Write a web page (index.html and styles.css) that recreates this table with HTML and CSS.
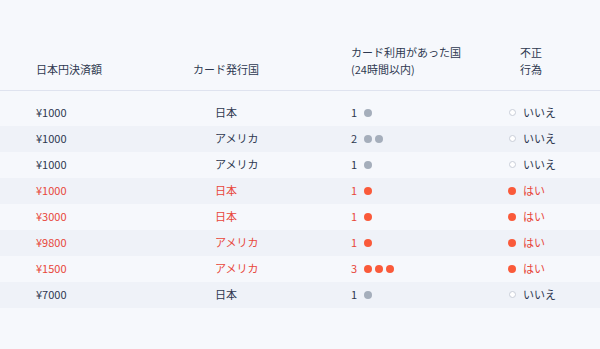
FILE: index.html
```html
<!DOCTYPE html>
<html lang="ja">
<head>
<meta charset="utf-8">
<link rel="stylesheet" href="styles.css">
</head>
<body>
<div class="table">
  <div class="row head">
    <div class="c1">日本円決済額</div>
    <div class="c2">カード発行国</div>
    <div class="c3">カード利用があった国<br>(24時間以内)</div>
    <div class="c4">不正<br>行為</div>
  </div>
  <div class="body">
    <div class="row">
      <div class="c1">¥1000</div><div class="c2 in">日本</div>
      <div class="c3 cnt">1<span class="dots"><i class="dot"></i></span></div>
      <div class="c4 flag"><i class="ring"></i>いいえ</div>
    </div>
    <div class="row alt">
      <div class="c1">¥1000</div><div class="c2 in">アメリカ</div>
      <div class="c3 cnt">2<span class="dots"><i class="dot"></i><i class="dot"></i></span></div>
      <div class="c4 flag"><i class="ring"></i>いいえ</div>
    </div>
    <div class="row">
      <div class="c1">¥1000</div><div class="c2 in">アメリカ</div>
      <div class="c3 cnt">1<span class="dots"><i class="dot"></i></span></div>
      <div class="c4 flag"><i class="ring"></i>いいえ</div>
    </div>
    <div class="row alt fraud">
      <div class="c1">¥1000</div><div class="c2 in">日本</div>
      <div class="c3 cnt">1<span class="dots"><i class="dot"></i></span></div>
      <div class="c4 flag"><i class="dot"></i>はい</div>
    </div>
    <div class="row fraud">
      <div class="c1">¥3000</div><div class="c2 in">日本</div>
      <div class="c3 cnt">1<span class="dots"><i class="dot"></i></span></div>
      <div class="c4 flag"><i class="dot"></i>はい</div>
    </div>
    <div class="row alt fraud">
      <div class="c1">¥9800</div><div class="c2 in">アメリカ</div>
      <div class="c3 cnt">1<span class="dots"><i class="dot"></i></span></div>
      <div class="c4 flag"><i class="dot"></i>はい</div>
    </div>
    <div class="row fraud">
      <div class="c1">¥1500</div><div class="c2 in">アメリカ</div>
      <div class="c3 cnt">3<span class="dots"><i class="dot"></i><i class="dot"></i><i class="dot"></i></span></div>
      <div class="c4 flag"><i class="dot"></i>はい</div>
    </div>
    <div class="row alt">
      <div class="c1">¥7000</div><div class="c2 in">日本</div>
      <div class="c3 cnt">1<span class="dots"><i class="dot"></i></span></div>
      <div class="c4 flag"><i class="ring"></i>いいえ</div>
    </div>
  </div>
</div>
</body>
</html>
```
FILE: styles.css
```css
html, body {
  margin: 0;
  padding: 0;
  background: #f6f8fc;
}
body {
  font-family: "Noto Sans CJK JP", "Noto Sans", sans-serif;
  font-size: 11px;
  color: #2e3850;
  width: 600px;
  height: 349px;
  overflow: hidden;
}
.row {
  display: grid;
  grid-template-columns: 157px 158px 157px 1fr;
  box-sizing: border-box;
  padding-left: 36px;
  padding-bottom: 1px;
  height: 26px;
  align-items: center;
  line-height: 17px;
}
.row.head {
  height: 91px;
  align-items: end;
  padding-bottom: 12px;
  border-bottom: 1px solid #dfe3ef;
}
.row.head .c4 {
  padding-left: 12px;
}
.body {
  padding-top: 9px;
}
.row.alt {
  background: #eff2f8;
}
.row.fraud {
  color: #e8473a;
}
.c2.in {
  padding-left: 22px;
}
.cnt, .flag {
  display: flex;
  align-items: center;
}
.dots {
  display: flex;
  gap: 3px;
  margin-left: 7px;
}
.dot, .ring {
  display: block;
  width: 8px;
  height: 8px;
  border-radius: 50%;
  box-sizing: border-box;
}
.dot {
  background: #a5aebb;
}
.fraud .dot {
  background: #fa5a3a;
}
.ring {
  width: 7px;
  height: 7px;
  border: 1px solid #c9ced8;
  background: #ffffff;
  margin-left: 1px;
}
.flag .dot, .flag .ring {
  margin-right: 7px;
}
```
